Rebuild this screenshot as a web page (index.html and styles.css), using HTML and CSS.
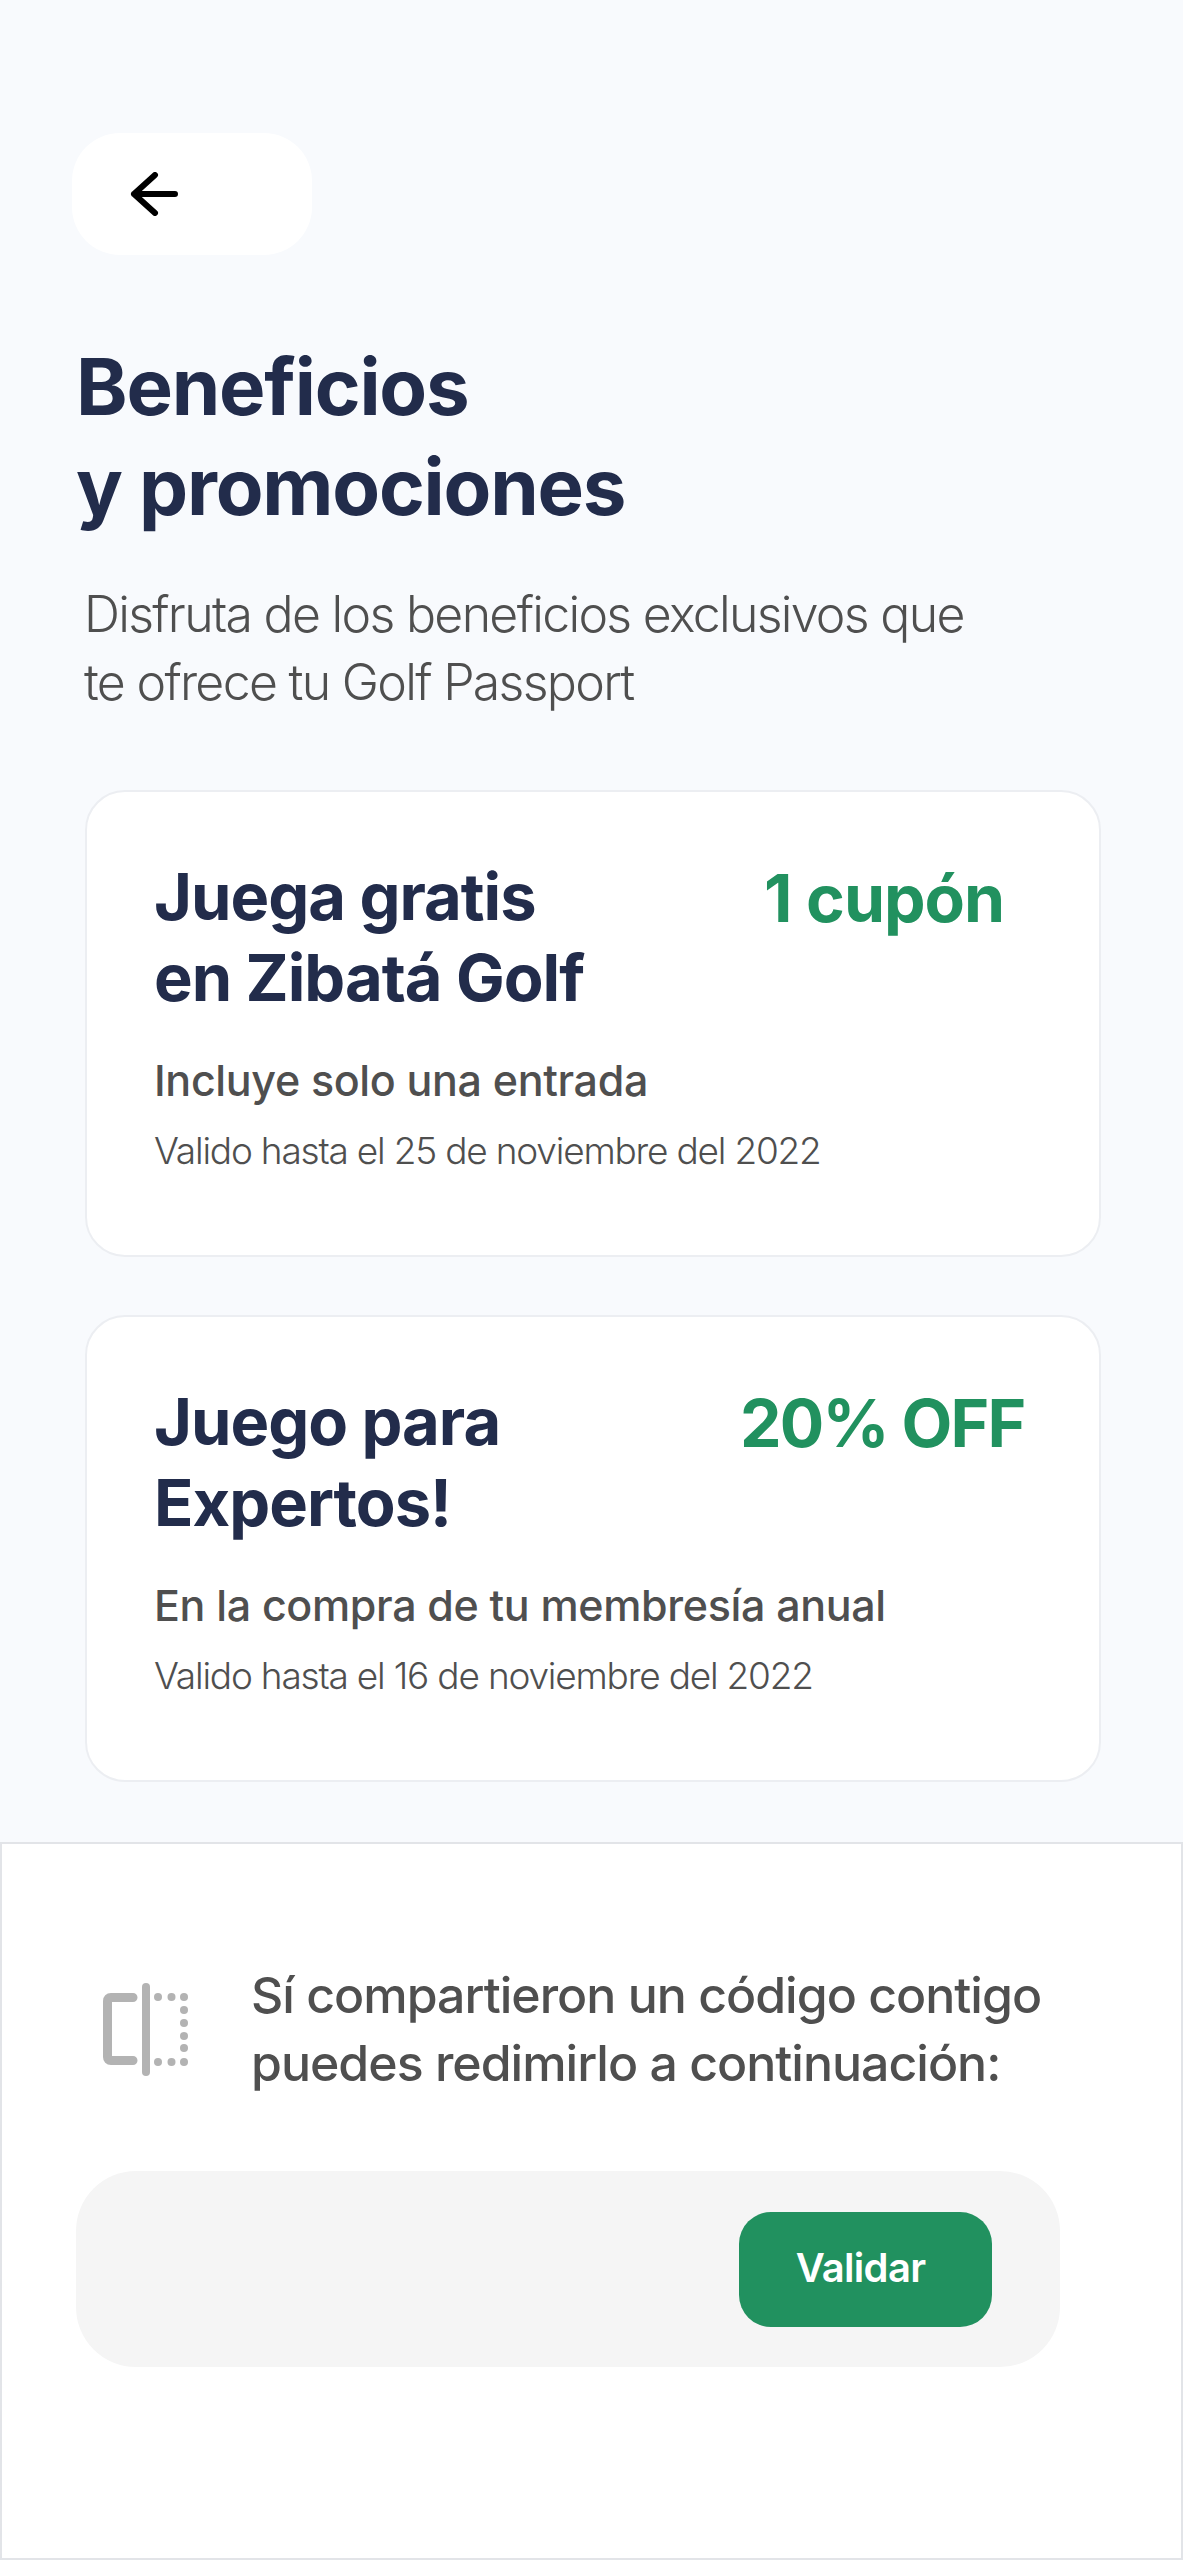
FILE: index.html
```html
<!DOCTYPE html>
<html lang="es">
<head>
<meta charset="utf-8">
<title>Beneficios y promociones</title>
<link rel="stylesheet" href="styles.css">
</head>
<body>
<main class="page">
  <section class="content">
    <button class="back" type="button" aria-label="Volver">
      <svg class="back-icon" viewBox="0 0 48 44" width="48" height="44" aria-hidden="true">
        <path d="M25 3 L4 22 L25 41 M4 22 H45" fill="none" stroke="#000" stroke-width="6" stroke-linecap="round" stroke-linejoin="round"/>
      </svg>
    </button>
    <h1 class="title">Beneficios<br>y promociones</h1>
    <p class="intro">Disfruta de los beneficios exclusivos que<br>te ofrece tu Golf Passport</p>
    <div class="cards">
      <article class="card">
        <div class="card-head">
          <h2 class="card-title">Juega gratis<br>en Zibatá Golf</h2>
          <span class="card-value value-coupon">1 cupón</span>
        </div>
        <p class="card-desc">Incluye solo una entrada</p>
        <p class="card-date">Valido hasta el 25 de noviembre del 2022</p>
      </article>
      <article class="card">
        <div class="card-head">
          <h2 class="card-title">Juego para<br>Expertos!</h2>
          <span class="card-value value-off">20% OFF</span>
        </div>
        <p class="card-desc">En la compra de tu membresía anual</p>
        <p class="card-date">Valido hasta el 16 de noviembre del 2022</p>
      </article>
    </div>
  </section>
  <section class="redeem">
    <div class="redeem-head">
      <svg class="redeem-icon" viewBox="0 0 90 96" width="90" height="96" aria-hidden="true">
        <path d="M30 15.5 H8 Q4.5 15.5 4.5 19 V75 Q4.5 78.5 8 78.5 H30" fill="none" stroke="#b3b3b3" stroke-width="9" stroke-linecap="round"/>
        <path d="M43 5 V90" fill="none" stroke="#b3b3b3" stroke-width="8" stroke-linecap="round"/>
        <g fill="#b3b3b3">
          <circle cx="55" cy="15" r="4"/><circle cx="68.500" cy="15" r="4"/><circle cx="81" cy="15" r="4"/>
          <circle cx="81" cy="28" r="4"/><circle cx="81" cy="41" r="4"/><circle cx="81" cy="54" r="4"/><circle cx="81" cy="66" r="4"/>
          <circle cx="55" cy="80" r="4"/><circle cx="68.500" cy="80" r="4"/><circle cx="81" cy="80" r="4"/>
        </g>
      </svg>
      <p class="redeem-text">Sí compartieron un código contigo<br>puedes redimirlo a continuación:</p>
    </div>
    <div class="field">
      <button class="validate" type="button">Validar</button>
    </div>
  </section>
</main>
</body>
</html>
```
FILE: styles.css
```css
* { box-sizing: border-box; }
html, body { margin: 0; padding: 0; }
body {
  background: #f8fafd;
  font-family: Inter, "Noto Sans", sans-serif;
}
.page {
  width: 1183px;
  height: 2560px;
  display: flex;
  flex-direction: column;
}
.content {
  height: 1842px;
  padding: 133px 0 0 0;
}
.back {
  display: flex;
  align-items: center;
  width: 240px;
  height: 122px;
  margin: 0 0 0 72px;
  padding: 0 0 0 58px;
  border: 0;
  border-radius: 48px;
  background: #fff;
}
.title {
  margin: 82px 0 0 76px;
  font-size: 78px;
  line-height: 100px;
  font-weight: 700;
  letter-spacing: -1.2px;
  color: #222c4b;
}
.intro {
  margin: 43px 0 0 84px;
  font-size: 50px;
  line-height: 68px;
  font-weight: 300;
  letter-spacing: -1.7px;
  color: #4f4f4f;
}
.cards {
  display: flex;
  flex-direction: column;
  gap: 58px;
  margin: 74px 82px 0 85px;
}
.card {
  height: 467px;
  padding: 64px 0 0 67px;
  background: #fff;
  border: 2px solid #eceef2;
  border-radius: 40px;
}
.card-head {
  display: flex;
  align-items: flex-start;
}
.card-title {
  width: 610px;
  flex: none;
  margin: 0;
  font-size: 65px;
  line-height: 81px;
  font-weight: 700;
  letter-spacing: -1px;
  color: #222c4b;
}
.card-value {
  margin-top: 2px;
  font-size: 66px;
  line-height: 80px;
  font-weight: 700;
  letter-spacing: -1px;
  color: #21915f;
}
.value-off {
  margin-left: -24px;
  letter-spacing: -1.8px;
}
.card-desc {
  margin: 34px 0 0 0;
  font-size: 43px;
  line-height: 56px;
  font-weight: 500;
  letter-spacing: -0.35px;
  color: #4f4f4f;
}
.card-date {
  margin: 17px 0 0 0;
  font-size: 37px;
  line-height: 52px;
  font-weight: 300;
  letter-spacing: -1.2px;
  color: #4f4f4f;
}
.redeem {
  flex: 1;
  background: #fff;
  border: 2px solid #e2e4e8;
  padding: 0 0 0 74px;
}
.redeem-head {
  display: flex;
  align-items: flex-start;
  margin-top: 128px;
}
.redeem-icon {
  flex: none;
  margin: 10px 0 0 27px;
}
.redeem-text {
  margin: -11px 0 0 58px;
  font-size: 50px;
  line-height: 68px;
  font-weight: 500;
  letter-spacing: -1px;
  color: #4f4f4f;
}
.field {
  display: flex;
  align-items: center;
  justify-content: flex-end;
  width: 984px;
  height: 196px;
  margin-top: 74px;
  padding-right: 68px;
  background: #f5f5f5;
  border-radius: 60px;
}
.validate {
  width: 253px;
  height: 115px;
  padding: 0 10px 3px 0;
  border: 0;
  border-radius: 32px;
  background: #21915f;
  color: #fff;
  font-family: inherit;
  font-size: 40px;
  font-weight: 600;
  letter-spacing: -0.7px;
}
```
